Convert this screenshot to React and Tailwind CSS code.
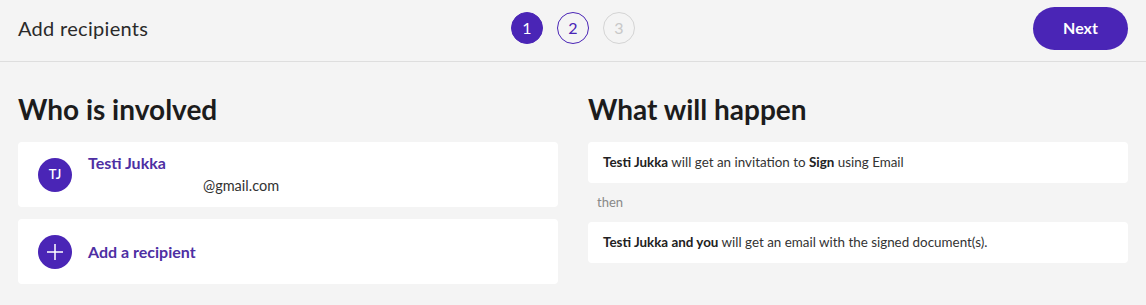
import React from "react";

const font = { fontFamily: "Lato, 'Open Sans', sans-serif" };

const Step = ({ n, state }) => {
  const cls =
    state === "active"
      ? "bg-[#4a25b6] text-white border-[#4a25b6]"
      : state === "next"
      ? "bg-transparent text-[#4a25b6] border-[#4a25b6]"
      : "bg-transparent text-[#c8c8c8] border-[#d4d4d4]";
  return (
    <div
      className={`w-8 h-8 rounded-full border flex items-center justify-center text-[16px] ${cls}`}
    >
      {n}
    </div>
  );
};

const Card = ({ children, className = "" }) => (
  <div className={`bg-white rounded-[4px] ${className}`}>{children}</div>
);

export default function App() {
  return (
    <div className="w-[1146px] h-[305px] bg-[#f4f4f4] text-[#222]" style={font}>
      {/* header */}
      <div className="h-[62px] border-b border-[#dedede] flex items-center px-[18px] pb-[5px]">
        <div className="text-[20px] tracking-[0.3px] text-[#2a2a2a] flex-1">Add recipients</div>
        <div className="flex items-center gap-[14px] mr-[398px]">
          <Step n="1" state="active" />
          <Step n="2" state="next" />
          <Step n="3" state="off" />
        </div>
        <button className="h-[43px] w-[95px] rounded-full bg-[#4a25b6] text-white font-bold text-[16px]">
          Next
        </button>
      </div>

      <div className="grid grid-cols-2 gap-[30px] px-[18px]">
        {/* left */}
        <div>
          <h1 className="text-[28px] font-bold text-[#1c1c1c] mt-[29px] leading-[36px]">
            Who is involved
          </h1>
          <Card className="mt-[15px] h-[65px] flex items-center px-[20px]">
            <div className="w-[34px] h-[34px] rounded-full bg-[#4a25b6] text-white text-[13px] font-semibold flex items-center justify-center">
              TJ
            </div>
            <div className="ml-[16px] flex flex-col">
              <span className="text-[16px] font-bold text-[#4e2fa3] leading-[20px]">
                Testi Jukka
              </span>
              <span className="text-[14.5px] text-[#333] leading-[20px] mt-[3px] pl-[115px]">
                @gmail.com
              </span>
            </div>
          </Card>
          <Card className="mt-[12px] h-[65px] flex items-center px-[20px]">
            <div className="w-[34px] h-[34px] rounded-full bg-[#4a25b6] flex items-center justify-center">
              <svg width="18" height="18" viewBox="0 0 18 18" fill="none" stroke="white" strokeWidth="1.5">
                <path d="M9 1v16M1 9h16" />
              </svg>
            </div>
            <span className="ml-[16px] text-[16px] font-bold text-[#4e2fa3]">
              Add a recipient
            </span>
          </Card>
        </div>

        {/* right */}
        <div>
          <h1 className="text-[28px] font-bold text-[#1c1c1c] mt-[29px] leading-[36px]">
            What will happen
          </h1>
          <Card className="mt-[15px] h-[41px] flex items-center px-[15px] text-[13.4px] text-[#333]">
            <span>
              <b className="font-bold text-[#222]">Testi Jukka</b> will get an invitation to{" "}
              <b className="font-bold text-[#222]">Sign</b> using Email
            </span>
          </Card>
          <div className="text-[13px] text-[#888] pl-[9px] h-[39px] flex items-center">then</div>
          <Card className="h-[41px] flex items-center px-[15px] text-[13.4px] text-[#333]">
            <span>
              <b className="font-bold text-[#222]">Testi Jukka and you</b> will get an email with the
              signed document(s).
            </span>
          </Card>
        </div>
      </div>
    </div>
  );
}
